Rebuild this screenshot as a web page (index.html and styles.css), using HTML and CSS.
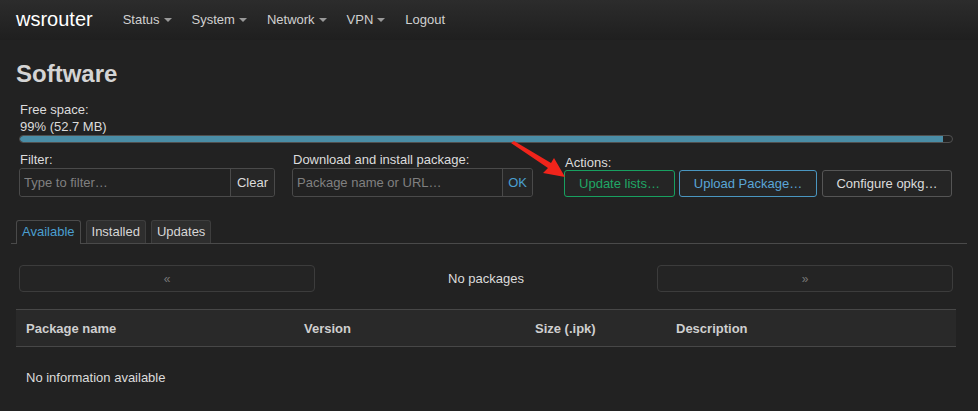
FILE: index.html
```html
<!DOCTYPE html>
<html>
<head>
<meta charset="utf-8">
<link rel="stylesheet" href="styles.css">
</head>
<body>
<header class="navbar">
  <a class="brand">wsrouter</a>
  <nav class="menu">
    <span class="item">Status<i class="caret"></i></span>
    <span class="item">System<i class="caret"></i></span>
    <span class="item">Network<i class="caret"></i></span>
    <span class="item">VPN<i class="caret"></i></span>
    <span class="item">Logout</span>
  </nav>
</header>
<main class="main">
  <h2 class="title">Software</h2>
  <div class="controls">
    <div class="label">Free space:</div>
    <div class="label">99% (52.7 MB)</div>
    <div class="progress"><div class="bar" style="width: 99%"></div></div>
    <div class="row">
      <div class="field filter">
        <div class="label">Filter:</div>
        <div class="group">
          <input class="input" placeholder="Type to filter…">
          <button class="addon">Clear</button>
        </div>
      </div>
      <div class="field download">
        <div class="label">Download and install package:</div>
        <div class="group">
          <input class="input" placeholder="Package name or URL…">
          <button class="addon ok">OK</button>
        </div>
      </div>
      <div class="field actions">
        <div class="label act-label">Actions:</div>
        <div class="btns">
          <button class="btn green">Update lists…</button>
          <button class="btn blue">Upload Package…</button>
          <button class="btn gray">Configure opkg…</button>
        </div>
      </div>
    </div>
  </div>
  <ul class="tabs">
    <li class="tab active">Available</li>
    <li class="tab">Installed</li>
    <li class="tab">Updates</li>
  </ul>
  <div class="pager">
    <button class="pbtn">«</button>
    <span class="pinfo">No packages</span>
    <button class="pbtn">»</button>
  </div>
  <table class="table">
    <thead>
      <tr><th class="c1">Package name</th><th class="c2">Version</th><th class="c3">Size (.ipk)</th><th>Description</th></tr>
    </thead>
    <tbody>
      <tr><td colspan="4">No information available</td></tr>
    </tbody>
  </table>
</main>
<svg class="arrow" width="70" height="45" viewBox="0 0 70 45">
  <polygon points="2,2 5,0 42,22 45,17 56,36 34,32 39,27" fill="#f0241b"/>
</svg>
</body>
</html>
```
FILE: styles.css
```css
html, body {
  margin: 0;
  padding: 0;
  background: #222;
  color: #dcdcdc;
  font-family: "Liberation Sans", Arial, sans-serif;
  font-size: 13px;
}
.navbar {
  height: 40px;
  background: linear-gradient(#2c2c2c, #1f1f1f);
  display: flex;
  align-items: center;
  padding-left: 16px;
}
.brand {
  color: #fff;
  font-size: 20px;
  line-height: 24px;
  margin-top: -2px;
  margin-right: 20px;
}
.menu {
  display: flex;
  align-items: center;
}
.item {
  color: #d0d0d0;
  font-size: 13px;
  padding: 0 10px;
  display: flex;
  align-items: center;
  margin-top: -1px;
}
.caret {
  display: inline-block;
  width: 0;
  height: 0;
  border-left: 4px solid transparent;
  border-right: 4px solid transparent;
  border-top: 4px solid #999;
  margin-left: 4px;
  margin-top: 1px;
}
.main {
  margin-left: 16px;
  width: 940px;
}
.title {
  margin: 0;
  padding-top: 19px;
  font-size: 24px;
  line-height: 30px;
  font-weight: bold;
  color: #d4d4d4;
}
.controls {
  padding: 12px 3px 0 3px;
}
.label {
  line-height: 17px;
  padding-left: 1px;
  color: #dcdcdc;
}
.progress {
  height: 6px;
  border: 1px solid #505050;
  border-radius: 4px;
  background: #222;
  overflow: hidden;
}
.bar {
  height: 100%;
  background: #4a8da6;
  border-radius: 3px 0 0 3px;
}
.row {
  display: flex;
  margin-top: 8px;
}
.group {
  display: flex;
  height: 29px;
  border: 1px solid #4a4a4a;
  border-radius: 3px;
  box-sizing: border-box;
}
.filter .group { width: 256px; }
.download { margin-left: 17px; }
.download .group { width: 241px; }
.input {
  flex: 1;
  min-width: 0;
  background: #222;
  border: none;
  color: #ddd;
  font-family: inherit;
  font-size: 13px;
  padding: 0 4px;
  outline: none;
  border-radius: 3px 0 0 3px;
}
.input::placeholder { color: #808080; }
.addon {
  background: #262626;
  border: none;
  border-left: 1px solid #4a4a4a;
  color: #dcdcdc;
  font-family: inherit;
  font-size: 13px;
  padding: 0 6px;
  border-radius: 0 3px 3px 0;
}
.addon.ok { color: #4a9fd0; padding: 0 5px; }
.actions { margin-left: 31px; }
.act-label { margin-top: 3px; }
.btns {
  display: flex;
  gap: 4px;
  margin-top: -1px;
}
.btn {
  height: 27px;
  background: #252525;
  border: 1px solid #555;
  border-radius: 3px;
  font-family: inherit;
  font-size: 13px;
  padding: 0;
  white-space: nowrap;
  color: #dcdcdc;
}
.btn.green { border-color: #18a060; color: #20a866; width: 111px; }
.btn.blue { border-color: #4a96c0; color: #5aa6d8; width: 138px; }
.btn.gray { border-color: #555; color: #dcdcdc; width: 130px; margin-left: 1px; }
.tabs {
  list-style: none;
  margin: 23px 0 0 -5px;
  padding: 0 0 0 5px;
  display: flex;
  gap: 5px;
  border-bottom: 1px solid #4a4a4a;
  width: 951px;
}
.tab {
  height: 22px;
  line-height: 22px;
  padding: 0 5px;
  border: 1px solid #3e3e3e;
  border-bottom: none;
  border-radius: 3px 3px 0 0;
  background: #2e2e2e;
  color: #d6d6d6;
}
.tab.active {
  background: #222;
  border-color: #4a4a4a;
  color: #4a9fd0;
  margin-bottom: -1px;
  height: 23px;
}
.pager {
  display: flex;
  align-items: center;
  padding: 0 3px;
  margin-top: 21px;
}
.pbtn {
  width: 296px;
  height: 27px;
  background: #242424;
  border: 1px solid #3c3c3c;
  border-radius: 4px;
  color: #777;
  font-family: inherit;
  font-size: 12px;
}
.pinfo {
  flex: 1;
  text-align: center;
  color: #dcdcdc;
}
.table {
  width: 940px;
  border-collapse: collapse;
  margin-top: 17px;
}
.table th {
  background: #292929;
  border-top: 1px solid #474747;
  border-bottom: 1px solid #474747;
  height: 37px;
  padding: 0 10px;
  text-align: left;
  font-weight: bold;
  color: #cfcfcf;
  box-sizing: border-box;
}
.c1 { width: 278px; }
.c2 { width: 231px; }
.c3 { width: 141px; }
.table td {
  padding: 0 10px;
  height: 60px;
  color: #dcdcdc;
}
.arrow {
  position: absolute;
  left: 509px;
  top: 141px;
}
```
